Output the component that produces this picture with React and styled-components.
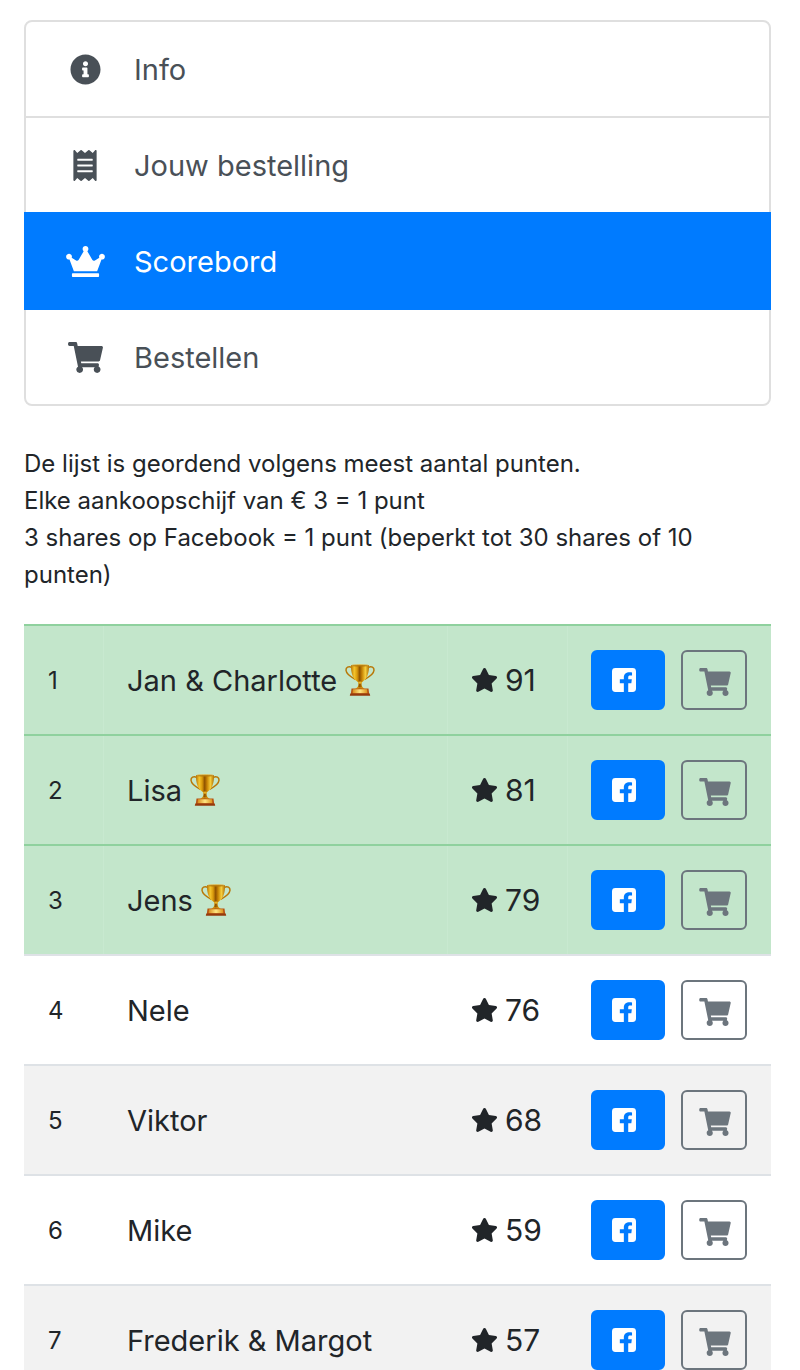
import React from 'react';
import styled, { createGlobalStyle, css } from 'styled-components';
import { FaInfoCircle, FaReceipt, FaCrown, FaShoppingCart, FaStar } from 'react-icons/fa';

const GlobalStyle = createGlobalStyle`
  *, *::before, *::after { box-sizing: border-box; }
  body {
    margin: 0;
    background: #fff;
    color: #212529;
    font-family: Inter, "Liberation Sans", sans-serif;
    font-size: 24px;
    line-height: 37px;
  }
`;

const Page = styled.main`
  padding: 20px 29px 0 24px;
`;

const Menu = styled.nav`
  display: flex;
  flex-direction: column;
  margin-bottom: 39px;
`;

const MenuLink = styled.a`
  display: flex;
  align-items: center;
  height: 98px;
  padding: 0 36px;
  border: 2px solid #dfdfdf;
  color: #495057;
  font-size: 29px;
  text-decoration: none;

  & + & { margin-top: -2px; }
  &:first-child { border-radius: 8px 8px 0 0; }
  &:last-child { border-radius: 0 0 8px 8px; }

  ${({ $active }) => $active && css`
    position: relative;
    border-color: #007bff;
    background: #007bff;
    color: #fff;
  `}
`;

const MenuIcon = styled.span`
  display: flex;
  justify-content: center;
  width: 46px;
  margin-right: 26px;

  svg {
    width: ${({ $width }) => $width}px;
    height: 31px;
  }
`;

const Intro = styled.p`
  margin: 0 0 31px;
`;

const Board = styled.table`
  width: 100%;
  table-layout: fixed;
  border-collapse: separate;
  border-spacing: 0;
`;

const RankCol = styled.col`width: 79px;`;
const ScoreCol = styled.col`width: 120px;`;
const ActionsCol = styled.col`width: 204px;`;

const Row = styled.tr`
  --line: #dee2e6;
  background: #fff;

  &:nth-child(odd) { background: #f2f2f2; }

  ${({ $winner }) => $winner && css`
    && { --line: #8fd19e; background: #c3e6cb; }
    td:not(:first-child) { box-shadow: inset 1px 0 #c8e9d0; }
  `}
`;

const Cell = styled.td`
  height: 110px;
  padding: 24px 0 24px 24px;
  border-top: 2px solid var(--line);
  vertical-align: middle;
  white-space: nowrap;
`;

const Name = styled.span`
  display: flex;
  align-items: center;
  gap: 8px;
  font-size: 29px;
`;

const Score = styled.span`
  display: flex;
  align-items: center;
  gap: 7px;
  font-size: 30px;
`;

const StarIcon = styled(FaStar)`
  width: 27px;
  height: 24px;
`;

const TrophySvg = styled.svg`
  width: 30px;
  height: 32px;
`;

const Actions = styled.div`
  display: flex;
  gap: 16px;
`;

const Button = styled.button`
  display: flex;
  align-items: center;
  justify-content: center;
  height: 60px;
  padding: 0;
  border: 2px solid;
  border-radius: 6px;
  cursor: pointer;
`;

const ShareButton = styled(Button)`
  width: 74px;
  padding-right: 8px;
  border-color: #007bff;
  background: #007bff;
  color: #fff;

  svg { width: 24px; height: 24px; }
`;

const OrderButton = styled(Button)`
  width: 66px;
  padding: 3px 0 0 2px;
  border-color: #6c757d;
  background: transparent;
  color: #6c757d;

  svg { width: 32px; height: 28px; }
`;

function FacebookIcon() {
  return (
    <svg viewBox="0 32 448 448" fill="currentColor" aria-hidden="true">
      <path d="M64 32h320a64 64 0 0 1 64 64v320a64 64 0 0 1-64 64h-81V318h58l9-74h-67v-40c0-22 10-34 34-34h37v-56c-12-2-28-3-44-3-66 0-109 34-109 96v37h-75v74h75v162H64a64 64 0 0 1-64-64V96a64 64 0 0 1 64-64z" />
    </svg>
  );
}

function Trophy() {
  return (
    <TrophySvg viewBox="0 0 30 32" role="img" aria-label="Trofee">
      <defs>
        <linearGradient id="cup" x1="0" x2="1">
          <stop offset="0" stopColor="#b87503" />
          <stop offset=".18" stopColor="#f4c52d" />
          <stop offset=".34" stopColor="#d99a0c" />
          <stop offset=".48" stopColor="#8f5200" />
          <stop offset=".62" stopColor="#c98606" />
          <stop offset=".8" stopColor="#f6ce3c" />
          <stop offset="1" stopColor="#b06f02" />
        </linearGradient>
        <linearGradient id="plate" x1="0" x2="1">
          <stop offset="0" stopColor="#d98b1a" />
          <stop offset=".5" stopColor="#ffe681" />
          <stop offset="1" stopColor="#dc911b" />
        </linearGradient>
      </defs>
      <g fill="none" stroke="#b87808" strokeWidth="1.5">
        <path d="M6.500 3.200C3.500 2 .8 3.400 1 6.300c.3 4 4.600 6.600 9.200 9" />
        <path d="M23.500 3.200c3-1.200 5.700.2 5.500 3.100-.3 4-4.600 6.600-9.200 9" />
      </g>
      <path d="M6 1.500h18c.2 7.500-2 13.500-6.500 16.300-.9.700-1 1.700-.9 2.600.1 1.800 1 3.200 3.400 4.600H10c2.400-1.400 3.300-2.800 3.400-4.600.1-.9 0-1.900-.9-2.600C8 15 5.800 9 6 1.500z" fill="url(#cup)" />
      <ellipse cx="15" cy="1.500" rx="9" ry="1.100" fill="#b67b0d" />
      <path d="M7 1.200c3-.8 13-.8 16 0" fill="none" stroke="#f1cf63" strokeWidth=".6" />
      <ellipse cx="15" cy="18.700" rx="2" ry="1.100" fill="#e7b429" />
      <path d="M10.500 24.500c1-1.500 8-1.500 9 0z" fill="#e2a51e" />
      <path d="M6.500 24.500h17l.7 5.500H5.800z" fill="#b65314" />
      <path d="M8 25.300h14l.4 3.900H7.600z" fill="url(#plate)" />
      <path d="M5.300 29.600h19.400l.5 2.200H4.800z" fill="#963a0c" />
    </TrophySvg>
  );
}

const menuItems = [
  { label: 'Info', Icon: FaInfoCircle, width: 31 },
  { label: 'Jouw bestelling', Icon: FaReceipt, width: 24 },
  { label: 'Scorebord', Icon: FaCrown, width: 39, active: true },
  { label: 'Bestellen', Icon: FaShoppingCart, width: 35 },
];

const players = [
  { name: 'Jan & Charlotte', score: 91, winner: true },
  { name: 'Lisa', score: 81, winner: true },
  { name: 'Jens', score: 79, winner: true },
  { name: 'Nele', score: 76 },
  { name: 'Viktor', score: 68 },
  { name: 'Mike', score: 59 },
  { name: 'Frederik & Margot', score: 57 },
];

export default function App() {
  return (
    <>
      <GlobalStyle />
      <Page>
        <Menu>
          {menuItems.map(({ label, Icon, width, active }) => (
            <MenuLink key={label} href="#" $active={active} aria-current={active ? 'page' : undefined}>
              <MenuIcon $width={width}><Icon aria-hidden="true" /></MenuIcon>
              {label}
            </MenuLink>
          ))}
        </Menu>
        <Intro>
          De lijst is geordend volgens meest aantal punten.<br />
          Elke aankoopschijf van € 3 = 1 punt<br />
          3 shares op Facebook = 1 punt (beperkt tot 30 shares of 10 punten)
        </Intro>
        <Board>
          <colgroup>
            <RankCol />
            <col />
            <ScoreCol />
            <ActionsCol />
          </colgroup>
          <tbody>
            {players.map(({ name, score, winner }, i) => (
              <Row key={name} $winner={winner}>
                <Cell>{i + 1}</Cell>
                <Cell>
                  <Name>{name}{winner && <Trophy />}</Name>
                </Cell>
                <Cell>
                  <Score><StarIcon aria-hidden="true" />{score}</Score>
                </Cell>
                <Cell>
                  <Actions>
                    <ShareButton type="button" aria-label={`Deel ${name} op Facebook`}>
                      <FacebookIcon />
                    </ShareButton>
                    <OrderButton type="button" aria-label={`Bestel bij ${name}`}>
                      <FaShoppingCart aria-hidden="true" />
                    </OrderButton>
                  </Actions>
                </Cell>
              </Row>
            ))}
          </tbody>
        </Board>
      </Page>
    </>
  );
}
